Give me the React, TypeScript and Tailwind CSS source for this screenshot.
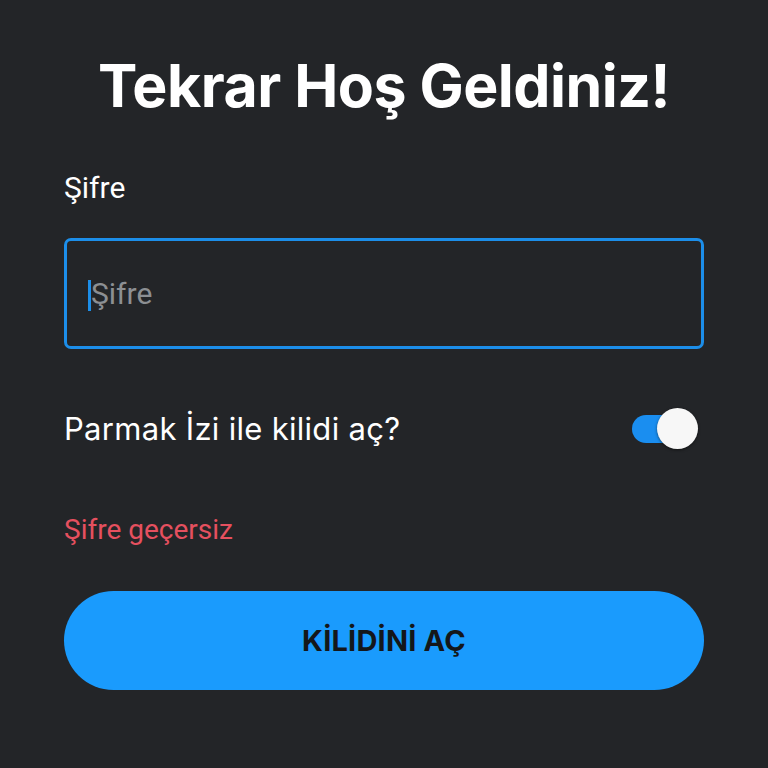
import React from "react";

export default function App() {
  return (
    <div className="w-[768px] h-[768px] bg-[#232528] flex flex-col px-[64px] pt-[52px]" style={{ fontFamily: "Roboto, sans-serif" }}>
      <h1 className="text-center text-white font-bold text-[59px] leading-[68px] tracking-[-0.5px]" style={{ fontFamily: "Inter, sans-serif" }}>
        Tekrar Hoş Geldiniz!
      </h1>
      <div className="mt-[51px] text-white text-[30px] leading-[34px]">Şifre</div>
      <div className="mt-[33px] h-[111px] border-[3px] border-[#1c8ee9] rounded-[7px] flex items-center pl-[21px]">
        <span className="w-[3px] h-[31px] bg-[#1c8ee9] mt-[3px]"></span>
        <span className="text-[#8c8f93] text-[30px] leading-[34px]">Şifre</span>
      </div>
      <div className="mt-[58px] flex items-center justify-between h-[44px]">
        <span className="text-white text-[31px] leading-[36px] tracking-[0.3px]" style={{ fontFamily: "Inter, sans-serif" }}>Parmak İzi ile kilidi aç?</span>
        <div className="relative w-[66px] h-[42px] mr-[6px]">
          <div className="absolute left-0 top-[7px] w-[46px] h-[28px] rounded-full bg-[#1a8ef0]"></div>
          <div className="absolute right-0 top-0 w-[41px] h-[41px] rounded-full bg-[#f7f7f7] shadow-[0_1px_3px_rgba(0,0,0,0.5)]"></div>
        </div>
      </div>
      <div className="mt-[62px] text-[#e5505f] text-[28px] leading-[34px]">Şifre geçersiz</div>
      <button className="mt-[44px] h-[99px] w-full rounded-full bg-[#1a9bfd] flex items-center justify-center text-[#14171a] font-bold text-[29px] tracking-[0.2px]" style={{ fontFamily: "Inter, sans-serif" }}>
        KİLİDİNİ AÇ
      </button>
    </div>
  );
}
